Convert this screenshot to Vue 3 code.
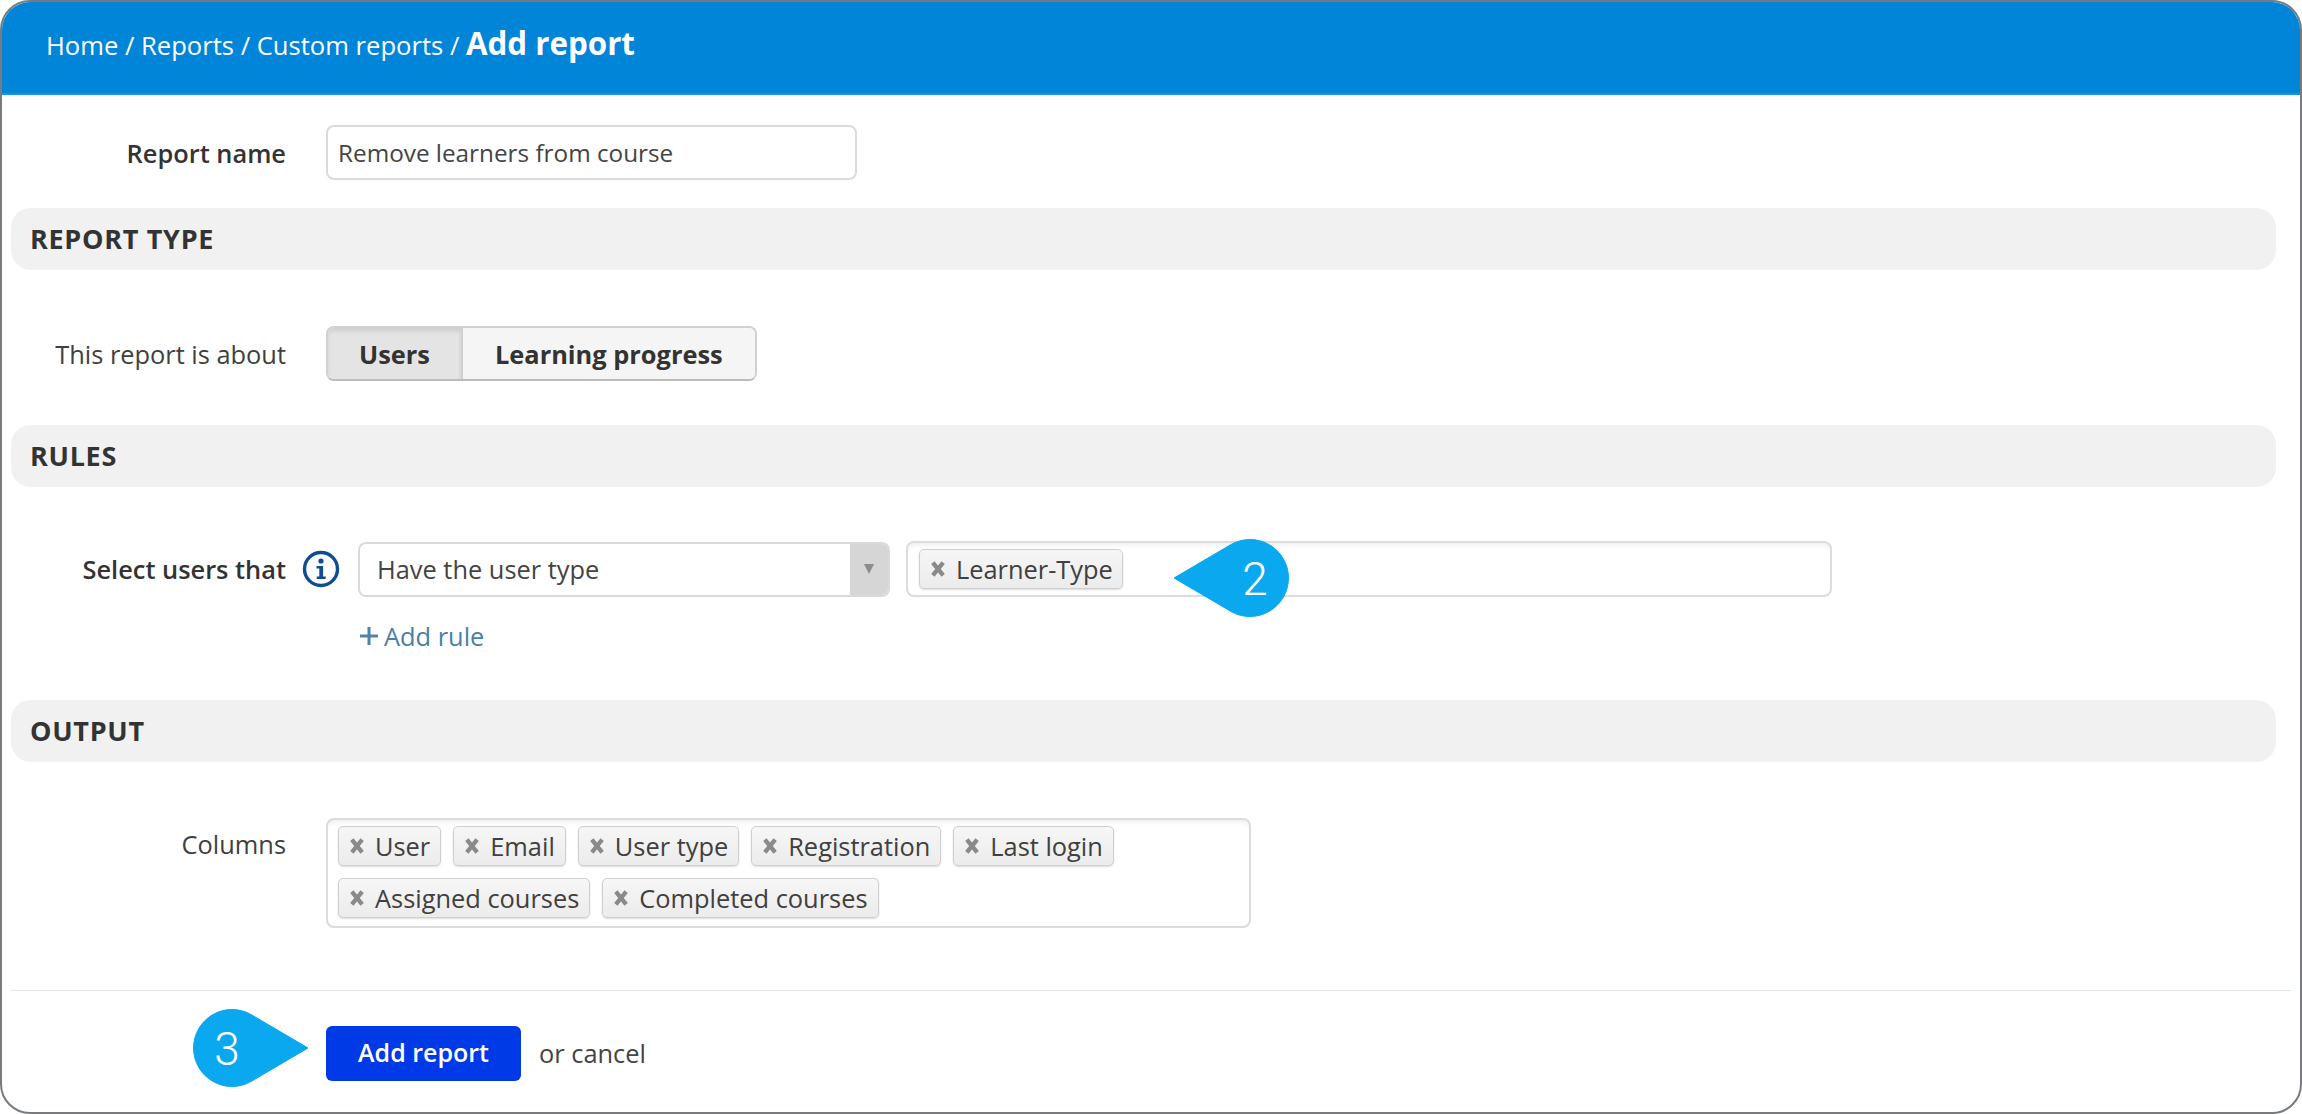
<script setup>
const ruleTags = ['Learner-Type']
const columnsA = ['User', 'Email', 'User type', 'Registration', 'Last login']
const columnsB = ['Assigned courses', 'Completed courses']
</script>

<template>
  <div class="window">
    <header class="top">
      <span>Home / Reports / Custom reports / </span><strong>Add report</strong>
    </header>

    <div class="row name-row">
      <label class="label strong">Report name</label>
      <div class="input">Remove learners from course</div>
    </div>

    <div class="section first">REPORT TYPE</div>
    <div class="row type-row">
      <label class="label">This report is about</label>
      <div class="toggle">
        <button class="tbtn active">Users</button>
        <button class="tbtn wide">Learning progress</button>
      </div>
    </div>

    <div class="section rules">RULES</div>
    <div class="row rule-row">
      <label class="label strong">Select users that</label>
      <svg class="info" viewBox="0 0 38 38">
        <circle cx="19" cy="19" r="16.5" fill="none" stroke="#0e4d96" stroke-width="3.4" />
        <circle cx="19" cy="11" r="2.6" fill="#0e4d96" />
        <path d="M14.5 16h6.6v10.4h2.6V29h-9v-2.6h2.6v-7.8h-2.8z" fill="#0e4d96" />
      </svg>
      <div class="select">
        <span class="select-text">Have the user type</span>
        <span class="select-arrow"><i></i></span>
      </div>
      <div class="multi rule-multi">
        <span v-for="t in ruleTags" :key="t" class="tag">
          <svg class="x" viewBox="0 0 14 14"><path d="M2.500 1.500l9 11M11.500 1.500l-9 11" stroke="#8a8a8a" stroke-width="3.800" /></svg>{{ t }}
        </span>
      </div>
    </div>
    <a class="add-rule"><svg viewBox="0 0 20 20"><path d="M10 1v18M1 10h18" stroke="#4a84ab" stroke-width="3" /></svg>Add rule</a>

    <div class="section output">OUTPUT</div>
    <div class="row col-row">
      <label class="label">Columns</label>
      <div class="multi col-multi">
        <div class="tagline">
          <span v-for="t in columnsA" :key="t" class="tag">
            <svg class="x" viewBox="0 0 14 14"><path d="M2.500 1.500l9 11M11.500 1.500l-9 11" stroke="#8a8a8a" stroke-width="3.800" /></svg>{{ t }}
          </span>
        </div>
        <div class="tagline">
          <span v-for="t in columnsB" :key="t" class="tag">
            <svg class="x" viewBox="0 0 14 14"><path d="M2.500 1.500l9 11M11.500 1.500l-9 11" stroke="#8a8a8a" stroke-width="3.800" /></svg>{{ t }}
          </span>
        </div>
      </div>
    </div>

    <div class="divider"></div>
    <div class="actions">
      <button class="primary">Add report</button>
      <span class="cancel">or cancel</span>
    </div>

    <svg class="bubble b2" viewBox="0 0 118 78">
      <path d="M1 39 L58 5.500 A38.500 38.500 0 1 1 58 72.500 Z" fill="#0aa8ee" stroke="#0aa8ee" stroke-linejoin="round" stroke-width="1" />
      <text x="82" y="56">2</text>
    </svg>
    <svg class="bubble b3" viewBox="0 0 118 78">
      <path d="M117 39 L60 5.500 A38.500 38.500 0 1 0 60 72.500 Z" fill="#0aa8ee" stroke="#0aa8ee" stroke-linejoin="round" stroke-width="1" />
      <text x="36" y="56">3</text>
    </svg>
  </div>
</template>

<style>
html, body { margin: 0; background: #fff; }
</style>

<style scoped>
.window {
  position: relative;
  box-sizing: border-box;
  width: 2302px;
  height: 1114px;
  background: #fff;
  border: 2px solid #777b80;
  border-radius: 30px;
  overflow: hidden;
  font-family: "Open Sans", sans-serif;
  font-size: 25.4px;
  color: #3f3f3f;
}
.top {
  box-sizing: border-box;
  height: 93px;
  padding: 21px 0 0 44px;
  background: #0085d8;
  border-bottom: 2px solid #1a90e0;
  color: #fff;
  font-size: 25.6px;
  line-height: 40px;
  white-space: pre;
}
.top strong { font-size: 31.3px; font-weight: 700; }
.row { display: flex; }
.label {
  box-sizing: border-box;
  width: 284px;
  text-align: right;
  flex: none;
  line-height: 34px;
}
.strong { font-weight: 600; color: #333; }
.name-row { margin-top: 30px; align-items: center; }
.input {
  box-sizing: border-box;
  margin-left: 40px;
  width: 531px;
  height: 55px;
  padding: 0 10px;
  display: flex;
  align-items: center;
  border: 2px solid #d6dbe0;
  border-radius: 8px;
  color: #444;
  font-size: 24.3px;
}
.section {
  box-sizing: border-box;
  margin: 0 24px 0 9px;
  height: 62px;
  padding-left: 19px;
  background: #f1f1f1;
  border-radius: 20px;
  font-size: 27px;
  font-weight: 700;
  letter-spacing: 0.7px;
  line-height: 62px;
  color: #333;
}
.section.first { margin-top: 28px; }
.type-row { margin-top: 56px; align-items: center; }
.toggle {
  margin-left: 40px;
  display: flex;
  height: 55px;
  box-sizing: border-box;
  border: 2px solid #d0d0d0;
  border-bottom-color: #bdbdbd;
  border-radius: 8px;
  overflow: hidden;
}
.tbtn {
  border: 0;
  margin: 0;
  padding: 0 31px;
  background: #f5f5f5;
  font: 700 25.4px "Open Sans", sans-serif;
  color: #333;
}
.tbtn.wide { padding: 0 32px; }
.tbtn.active {
  background: #e4e4e4;
  box-shadow: inset 0 3px 4px rgba(0, 0, 0, 0.1);
  border-right: 2px solid #d0d0d0;
}
.section.rules { margin-top: 44px; }
.rule-row { margin-top: 54px; align-items: center; position: relative; }
.info { width: 38px; height: 38px; margin-left: 16px; flex: none; }
.select {
  box-sizing: border-box;
  margin-left: 18px;
  width: 532px;
  height: 55px;
  display: flex;
  align-items: center;
  justify-content: space-between;
  border: 2px solid #d6dbe0;
  border-radius: 8px;
  overflow: hidden;
  padding-left: 17px;
  color: #444;
}
.select-arrow {
  width: 38px;
  height: 100%;
  background: #d6d6d6;
  display: flex;
  align-items: center;
  justify-content: center;
}
.select-arrow i {
  width: 0;
  height: 0;
  border-left: 5px solid transparent;
  border-right: 5px solid transparent;
  border-top: 10px solid #8c8c8c;
}
.multi {
  box-sizing: border-box;
  border: 2px solid #dcdcdc;
  border-radius: 8px;
  box-shadow: inset 0 5px 5px -3px rgba(0, 0, 0, 0.07);
}
.rule-multi {
  margin-left: 16px;
  width: 926px;
  height: 56px;
  padding: 6px 0 0 11px;
  display: flex;
}
.tag {
  box-sizing: border-box;
  height: 40px;
  padding: 0 9px 0 10px;
  display: inline-flex;
  align-items: center;
  white-space: nowrap;
  background: linear-gradient(#f6f6f6, #ececec);
  border: 1px solid #cfcfcf;
  border-radius: 5px;
  box-shadow: 0 1px 2px rgba(0, 0, 0, 0.14);
  color: #404040;
}
.x { width: 16px; height: 16px; margin-right: 10px; flex: none; }
.add-rule {
  display: flex;
  align-items: center;
  margin: 22px 0 0 357px;
  height: 34px;
  color: #4a7fa5;
}
.add-rule svg { width: 20px; height: 20px; margin-right: 5px; }
.section.output { margin-top: 47px; }
.col-row { margin-top: 56px; align-items: flex-start; }
.col-row .label { margin-top: 9px; }
.col-multi {
  margin-left: 40px;
  width: 925px;
  height: 110px;
  padding: 6px 0 0 10px;
}
.tagline { display: flex; gap: 12px; }
.tagline .tag { padding-right: 10px; }
.tagline + .tagline { margin-top: 12px; }
.divider {
  margin: 62px 9px 0;
  height: 1px;
  background: #e4e4e4;
}
.actions {
  margin: 35px 0 0 324px;
  display: flex;
  align-items: center;
}
.primary {
  width: 195px;
  height: 55px;
  padding: 0 0 3px;
  border: 0;
  border-radius: 6px;
  background: #003ae6;
  color: #fff;
  font: 600 25px "Open Sans", sans-serif;
}
.cancel { margin: 0 0 2px 18px; color: #444; }
.bubble { position: absolute; width: 118px; height: 78px; }
.bubble text {
  font-family: Roboto, sans-serif;
  font-weight: 300;
  font-size: 46px;
  fill: #fff;
  text-anchor: middle;
}
.b2 { left: 1171px; top: 537px; }
.b3 { left: 189px; top: 1007px; }
</style>
